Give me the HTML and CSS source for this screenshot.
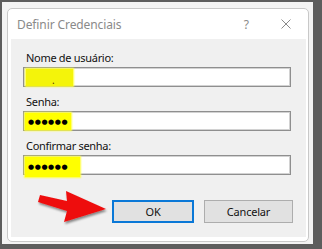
FILE: index.html
```html
<!DOCTYPE html>
<html>
<head>
<meta charset="utf-8">
<link rel="stylesheet" href="styles.css">
</head>
<body>
<div class="screen">
  <div class="dialog">
    <div class="titlebar">
      <span class="title">Definir Credenciais</span>
      <span class="help">?</span>
      <svg class="close" width="10" height="10" viewBox="0 0 10 10"><path d="M0.5 0.5 L9.5 9.5 M9.5 0.5 L0.5 9.5" stroke="#8a8a8a" stroke-width="1" fill="none"/></svg>
    </div>
    <div class="panel">
      <div class="field">
        <div class="label">Nome de usuário:</div>
        <div class="input"><span class="mark mark-user"><span class="tiny">.</span></span></div>
      </div>
      <div class="field">
        <div class="label">Senha:</div>
        <div class="input"><span class="mark mark-pass"><span class="dots">●●●●●●</span></span></div>
      </div>
      <div class="field">
        <div class="label">Confirmar senha:</div>
        <div class="input"><span class="mark mark-conf"><span class="dots">●●●●●●</span></span></div>
      </div>
      <div class="buttons">
        <button class="btn btn-ok">OK</button>
        <button class="btn btn-cancel">Cancelar</button>
      </div>
      <svg class="arrow" width="80" height="38" viewBox="0 0 80 38">
        <defs>
          <filter id="sh" x="-20%" y="-30%" width="140%" height="170%">
            <feDropShadow dx="1" dy="2" stdDeviation="1.2" flood-color="#000" flood-opacity="0.45"/>
          </filter>
        </defs>
        <path d="M3 5 L30 11 L29 1 L69 19 L27 32 L30 21 L1 12 Z" fill="#ee1111" filter="url(#sh)"/>
      </svg>
    </div>
  </div>
</div>
</body>
</html>
```
FILE: styles.css
```css
* { box-sizing: border-box; }
html, body { margin: 0; padding: 0; }
body {
  width: 322px;
  height: 249px;
  background: #5d5d5d;
  font-family: "Noto Sans", "Liberation Sans", sans-serif;
  font-size: 11px;
  overflow: hidden;
}
.screen {
  margin: 2px 9px 5px 2px;
  width: 311px;
  height: 242px;
  background: #f3f3f3;
  padding: 6px 4px 2px 5px;
}
.dialog {
  width: 302px;
  height: 234px;
  background: #fff;
  border: 1px solid #c8c8c8;
  border-radius: 5px;
  padding: 0 2px 4px 3px;
  display: flex;
  flex-direction: column;
}
.titlebar {
  height: 30px;
  display: flex;
  align-items: center;
  padding-left: 6px;
  color: #8a8a8a;
}
.title { font-size: 12px; letter-spacing: -0.1px; }
.help { margin-left: auto; font-size: 12px; color: #8a8a8a; margin-right: 32px; }
.close { margin-right: 15px; }
.panel {
  position: relative;
  flex: 1;
  background: #f0f0f0;
  padding: 11px 13px 0 12px;
  display: flex;
  flex-direction: column;
}
.field { margin-bottom: 7px; }
.label {
  height: 17px;
  line-height: 16px;
  padding-left: 3px;
  color: #111;
  letter-spacing: -0.3px;
}
.input {
  position: relative;
  width: 268px;
  height: 20px;
  background: #fff;
  border: 1px solid #8f8f8f;
  box-shadow: inset 0 0 0 1px #d2d2d2;
}
.mark {
  position: absolute;
  top: 1px;
  left: 1px;
  height: 17px;
  background: #ffff00;
  box-shadow: 0 0 1.5px 1px #ffff40;
  display: flex;
  align-items: center;
}
.mark-user { width: 47px; left: 2px; background: #f4f40a; }
.mark-pass { width: 46px; }
.mark-conf { width: 55px; height: 20px; }
.tiny {
  position: absolute;
  left: 26px;
  top: 4px;
  color: #553300;
  font-size: 10px;
}
.dots {
  font-family: "DejaVu Sans", sans-serif;
  font-size: 7px;
  letter-spacing: 0.6px;
  padding-left: 3px;
  color: #000;
}
.buttons {
  display: flex;
  justify-content: flex-end;
  gap: 10px;
  margin-top: 18px;
}
.btn {
  height: 23px;
  background: #e1e1e1;
  border: 1px solid #adadad;
  font-family: inherit;
  font-size: 11px;
  letter-spacing: -0.2px;
  color: #111;
  padding: 0;
}
.btn-ok { width: 82px; border: 2px solid #0a78d7; }
.btn-cancel { width: 89px; }
.arrow {
  position: absolute;
  left: 26px;
  top: 151px;
}
```
